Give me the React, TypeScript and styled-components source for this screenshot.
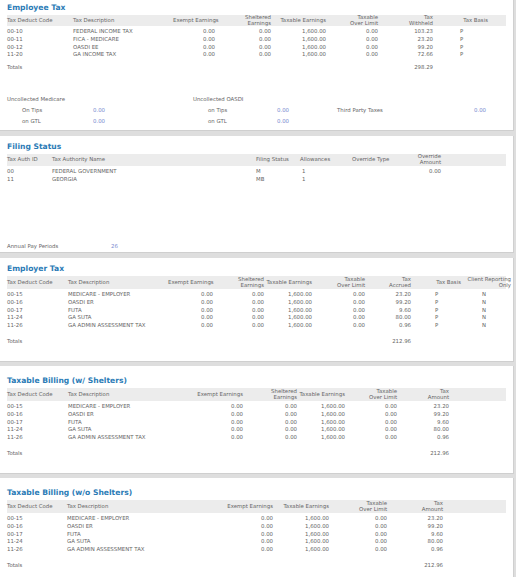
import React from "react";
import styled, { createGlobalStyle } from "styled-components";

const Global = createGlobalStyle`
  html, body { margin: 0; padding: 0; background: #dedede; }
  body { font-family: "DejaVu Sans", Verdana, sans-serif; color: #666; font-size: 5.4px; }
`;

const Page = styled.div`
  width: 514px;
  display: flex;
  flex-direction: column;
`;

const Panel = styled.section<{ $h: number; $pt: number; $mb: number }>`
  background: #fff;
  height: ${(p) => p.$h}px;
  padding: ${(p) => p.$pt}px 7px 0 7px;
  margin-bottom: ${(p) => p.$mb}px;
  box-sizing: border-box;
  border-right: 1px solid #d0d0d0;
  border-bottom: 1px solid #cfcfcf;
  overflow: hidden;
`;

const Title = styled.h2`
  margin: 0 0 3px 0;
  font-size: 7.6px;
  font-weight: 600;
  color: #2b7bb6;
  line-height: 9px;
`;

const Row = styled.div<{ $cols: string; $head?: boolean; $h?: number }>`
  display: grid;
  grid-template-columns: ${(p) => p.$cols};
  align-items: center;
  background: ${(p) => (p.$head ? "#ececec" : "transparent")};
  height: ${(p) => p.$h ?? 7.8}px;
  line-height: 5.6px;
  margin-bottom: ${(p) => (p.$head ? 2 : 0)}px;
`;

const Cell = styled.div<{ $align?: string; $pl?: number }>`
  text-align: ${(p) => p.$align ?? "left"};
  padding-left: ${(p) => p.$pl ?? 0}px;
  white-space: nowrap;
  overflow: visible;
`;

const HCell = styled(Cell)`
  white-space: pre;
  direction: ltr;
`;

const Spacer = styled.div<{ $h: number }>`
  height: ${(p) => p.$h}px;
`;

const Line = styled.div<{ $h?: number }>`
  display: flex;
  align-items: center;
  height: ${(p) => p.$h ?? 11}px;
`;

const Label = styled.span<{ $w: number; $pl?: number }>`
  display: inline-block;
  width: ${(p) => p.$w}px;
  padding-left: ${(p) => p.$pl ?? 0}px;
  box-sizing: border-box;
  white-space: nowrap;
`;

const Blue = styled.span<{ $w?: number; $align?: string }>`
  display: inline-block;
  color: #7a8ad0;
  width: ${(p) => (p.$w ? p.$w + "px" : "auto")};
  text-align: ${(p) => p.$align ?? "left"};
`;

type Col = { w: number; a?: string; pl?: number; hpl?: number; ha?: string };

function Table({ cols, head, rows, headH = 11 }: { cols: Col[]; head: string[]; rows: string[][]; headH?: number }) {
  const tpl = cols.map((c) => c.w + "px").join(" ");
  return (
    <>
      <Row $cols={tpl} $head $h={headH}>
        {head.map((h, i) => (
          <HCell key={i} $align={cols[i].ha ?? cols[i].a} $pl={cols[i].hpl}>
            {h}
          </HCell>
        ))}
      </Row>
      {rows.map((r, j) => (
        <Row $cols={tpl} key={j}>
          {r.map((v, i) => (
            <Cell key={i} $align={cols[i].a} $pl={cols[i].pl}>
              {v}
            </Cell>
          ))}
        </Row>
      ))}
    </>
  );
}

const Z = "0.00";
const T = "1,600.00";

export default function App() {
  const etCols: Col[] = [{ w: 66 }, { w: 100 }, { w: 42, a: "right" }, { w: 56, a: "right" }, { w: 55, a: "right" }, { w: 52, a: "right" }, { w: 55, a: "right" }, { w: 55, pl: 27, ha: "right" }];
  const fsCols: Col[] = [{ w: 45 }, { w: 204 }, { w: 44 }, { w: 52, pl: 2 }, { w: 63 }, { w: 26, a: "right" }, { w: 49 }];
  const erCols: Col[] = [{ w: 61 }, { w: 100 }, { w: 45, a: "right" }, { w: 51, a: "right" }, { w: 48, a: "right" }, { w: 53, a: "right" }, { w: 46, a: "right" }, { w: 50, pl: 24, ha: "right" }, { w: 50, pl: 21, ha: "right" }];
  const tbCols: Col[] = [{ w: 61 }, { w: 120 }, { w: 55, a: "right" }, { w: 54, a: "right" }, { w: 48, a: "right" }, { w: 52, a: "right" }, { w: 52, a: "right" }];
  const toCols: Col[] = [{ w: 60 }, { w: 140 }, { w: 66, a: "right" }, { w: 56, a: "right" }, { w: 58, a: "right" }, { w: 56, a: "right" }];
  const er = [
    ["00-15", "MEDICARE - EMPLOYER", "23.20"],
    ["00-16", "OASDI ER", "99.20"],
    ["00-17", "FUTA", "9.60"],
    ["11-24", "GA SUTA", "80.00"],
    ["11-26", "GA ADMIN ASSESSMENT TAX", "0.96"],
  ];
  return (
    <Page>
      <Global />
      <Panel $h={131} $pt={3} $mb={5}>
        <Title>Employee Tax</Title>
        <Table
          cols={etCols}
          head={["Tax Deduct Code", "Tax Description", "Exempt Earnings", "Sheltered\nEarnings", "Taxable Earnings", "Taxable\nOver Limit", "Tax\nWithheld", "Tax Basis"]}
          rows={[
            ["00-10", "FEDERAL INCOME TAX", Z, Z, T, Z, "103.23", "P"],
            ["00-11", "FICA - MEDICARE", Z, Z, T, Z, "23.20", "P"],
            ["00-12", "OASDI EE", Z, Z, T, Z, "99.20", "P"],
            ["11-20", "GA INCOME TAX", Z, Z, T, Z, "72.66", "P"],
          ]}
        />
        <Spacer $h={5} />
        <Row $cols={etCols.map((c) => c.w + "px").join(" ")}>
          <Cell>Totals</Cell><Cell /><Cell /><Cell /><Cell /><Cell /><Cell $align="right">298.29</Cell><Cell />
        </Row>
        <Spacer $h={22} />
        <Line>
          <Label $w={186}>Uncollected Medicare</Label>
          <Label $w={150}>Uncollected OASDI</Label>
        </Line>
        <Line>
          <Label $w={86} $pl={15}>On Tips</Label>
          <Label $w={100}><Blue>0.00</Blue></Label>
          <Label $w={84} $pl={15}>on Tips</Label>
          <Label $w={60}><Blue>0.00</Blue></Label>
          <Label $w={120}>Third Party Taxes</Label>
          <Blue $w={29} $align="right">0.00</Blue>
        </Line>
        <Line>
          <Label $w={86} $pl={15}>on GTL</Label>
          <Label $w={100}><Blue>0.00</Blue></Label>
          <Label $w={84} $pl={15}>on GTL</Label>
          <Label $w={60}><Blue>0.00</Blue></Label>
        </Line>
      </Panel>

      <Panel $h={117} $pt={6} $mb={5}>
        <Title>Filing Status</Title>
        <Table
          cols={fsCols}
          headH={12}
          head={["Tax Auth ID", "Tax Authority Name", "Filing Status", "Allowances", "Override Type", "Override\nAmount", ""]}
          rows={[
            ["00", "FEDERAL GOVERNMENT", "M", "1", "", Z, ""],
            ["11", "GEORGIA", "MB", "1", "", "", ""],
          ]}
        />
        <Spacer $h={57} />
        <Line>
          <Label $w={104}>Annual Pay Periods</Label>
          <Blue>26</Blue>
        </Line>
      </Panel>

      <Panel $h={104} $pt={6} $mb={4}>
        <Title>Employer Tax</Title>
        <Table
          cols={erCols}
          headH={13}
          head={["Tax Deduct Code", "Tax Description", "Exempt Earnings", "Sheltered\nEarnings", "Taxable Earnings", "Taxable\nOver Limit", "Tax\nAccrued", "Tax Basis", "Client Reporting\nOnly"]}
          rows={er.map((r) => [r[0], r[1], Z, Z, T, Z, r[2], "P", "N"])}
        />
        <Spacer $h={8} />
        <Row $cols={erCols.map((c) => c.w + "px").join(" ")}>
          <Cell>Totals</Cell><Cell /><Cell /><Cell /><Cell /><Cell /><Cell $align="right">212.96</Cell><Cell /><Cell />
        </Row>
      </Panel>

      <Panel $h={108} $pt={10} $mb={4}>
        <Title>Taxable Billing (w/ Shelters)</Title>
        <Table
          cols={tbCols}
          headH={13}
          head={["Tax Deduct Code", "Tax Description", "Exempt Earnings", "Sheltered\nEarnings", "Taxable Earnings", "Taxable\nOver Limit", "Tax\nAmount"]}
          rows={er.map((r) => [r[0], r[1], Z, Z, T, Z, r[2]])}
        />
        <Spacer $h={8} />
        <Row $cols={tbCols.map((c) => c.w + "px").join(" ")}>
          <Cell>Totals</Cell><Cell /><Cell /><Cell /><Cell /><Cell /><Cell $align="right">212.96</Cell>
        </Row>
      </Panel>

      <Panel $h={110} $pt={10} $mb={0}>
        <Title>Taxable Billing (w/o Shelters)</Title>
        <Table
          cols={toCols}
          headH={13}
          head={["Tax Deduct Code", "Tax Description", "Exempt Earnings", "Taxable Earnings", "Taxable\nOver Limit", "Tax\nAmount"]}
          rows={er.map((r) => [r[0], r[1], Z, T, Z, r[2]])}
        />
        <Spacer $h={8} />
        <Row $cols={toCols.map((c) => c.w + "px").join(" ")}>
          <Cell>Totals</Cell><Cell /><Cell /><Cell /><Cell /><Cell $align="right">212.96</Cell>
        </Row>
      </Panel>
    </Page>
  );
}
